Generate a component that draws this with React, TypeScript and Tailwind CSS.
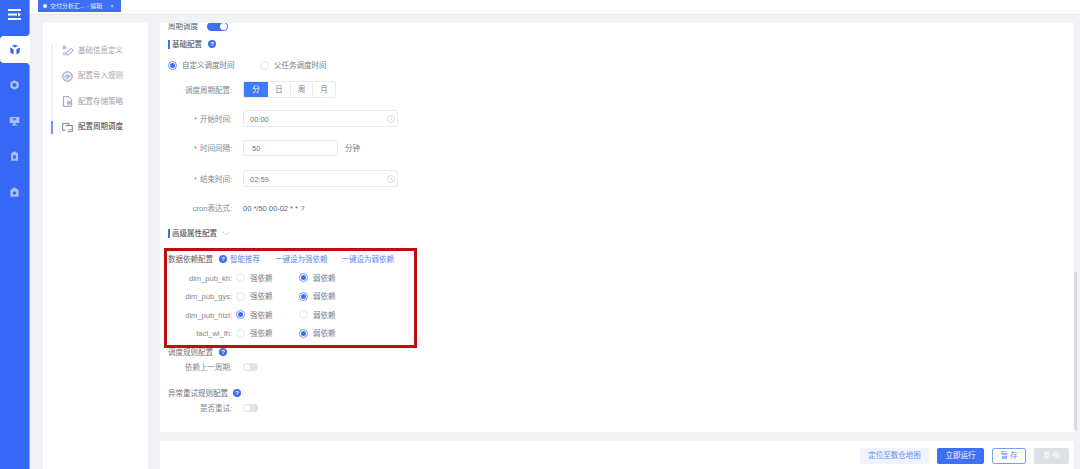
import React from 'react';

const Help = ({ className = '' }: { className?: string }) => (
  <span className={`inline-flex h-[8px] w-[8px] shrink-0 items-center justify-center rounded-full bg-[#3f6ff2] text-[6px] font-bold leading-none text-white ${className}`}>?</span>
);

const Radio = ({ on, label, className = '' }: { on?: boolean; label: string; className?: string }) => (
  <span className={`flex items-center ${className}`}>
    <span className={`flex h-[9px] w-[9px] shrink-0 items-center justify-center rounded-full border-[0.75px] bg-white ${on ? 'border-[#6f93f4]' : 'border-[#e2e4e8]'}`}>
      {on && <span className="h-[5px] w-[5px] rounded-full bg-[#3f6ff2]" />}
    </span>
    <span className="ml-[5px] pt-[2px] text-[#777b82]">{label}</span>
  </span>
);

const Off = () => (
  <span className="flex h-[8px] w-[15px] items-center rounded-full bg-[#dfe2e7] pl-[1px]">
    <span className="h-[6px] w-[6px] rounded-full bg-white" />
  </span>
);

const Row = ({ label, star, className = '', children }: { label: string; star?: boolean; className?: string; children: React.ReactNode }) => (
  <div className={`flex items-center ${className}`}>
    <span className="w-[72px] shrink-0 pt-[2px] text-right text-[#85888e]">
      {star && <span className="mr-[3px] text-[#f0594c]">*</span>}
      {label}
    </span>
    <div className="ml-[11px] flex items-center">{children}</div>
  </div>
);

const Clock = () => (
  <svg width="8" height="8" viewBox="0 0 16 16" fill="none" stroke="#c4c8ce" strokeWidth="1.2">
    <circle cx="8" cy="8" r="7" />
    <path d="M8 4v4.5l3 1.5" />
  </svg>
);

const TimeInput = ({ value }: { value: string }) => (
  <div className="flex h-[17px] w-[155px] items-center justify-between rounded-[2px] border border-[#e8eaee] pl-[6px] pr-[2px] text-[#6f7782]">
    <span className="pt-[2px]">{value}</span>
    <Clock />
  </div>
);

const SectionTitle = ({ label, className = '', children }: { label: string; className?: string; children?: React.ReactNode }) => (
  <div className={`ml-[8px] flex h-[14px] items-center ${className}`}>
    <span className="h-[9px] w-[2px] bg-[#3f6ff2]" />
    <span className="ml-[2px] pt-[2px] font-medium text-[#5c6068]">{label}</span>
    {children}
  </div>
);

const deps = [
  { name: 'dim_pub_kh', strong: false },
  { name: 'dim_pub_gys', strong: false },
  { name: 'dim_pub_htzl', strong: true },
  { name: 'fact_wl_fh', strong: false },
];

const menu = [
  {
    label: '基础信息定义',
    icon: (
      <>
        <rect x="1" y="1" width="5" height="5" fill="#a9bdf0" />
        <rect x="1" y="10" width="5" height="5" fill="#c8d4f5" />
        <path d="M7 11l5-5a2 2 0 0 1 3 3l-5 5a2 2 0 0 1-3-3z" fill="none" stroke="#7e8ba8" strokeWidth="1.3" />
      </>
    ),
  },
  {
    label: '配置导入规则',
    icon: (
      <>
        <circle cx="8" cy="8" r="7" fill="#e4eafa" stroke="#7e8ba8" strokeWidth="1.2" />
        <path d="M4 9c2-3 5-3 8-1M6 12l4-5" fill="none" stroke="#7e8ba8" strokeWidth="1.2" />
      </>
    ),
  },
  {
    label: '配置存储策略',
    icon: (
      <>
        <path d="M2 1h8l4 4v10H2z" fill="none" stroke="#7e8ba8" strokeWidth="1.2" />
        <circle cx="10" cy="10" r="3" fill="#9db4ee" />
      </>
    ),
  },
  {
    label: '配置周期调度',
    active: true,
    icon: (
      <>
        <path d="M5 12H1V2h9v3" fill="none" stroke="#6d7688" strokeWidth="1.3" />
        <path d="M5 5h10v9H8" fill="none" stroke="#6d7688" strokeWidth="1.3" />
        <path d="M9 11h5" stroke="#7c9cf0" strokeWidth="1.4" />
      </>
    ),
  },
];

const navIcons = [
  <path key="a" d="M8 1l6 3.5v7L8 15l-6-3.5v-7zM8 5a3 3 0 1 0 0 6 3 3 0 0 0 0-6z" fillRule="evenodd" />,
  <path key="b" d="M1 2h14v9H9.5v2H12v1.500H4V13h2.500v-2H1zM5 4l3 4 3-4z" fillRule="evenodd" />,
  <path key="c" d="M8 1l5 3v11H3V4zM6 7v5h4V7z" fillRule="evenodd" />,
  <path key="d" d="M8 1l6 4v10H2V5zM8 7a2.500 2.500 0 1 0 0 5 2.500 2.500 0 0 0 0-5z" fillRule="evenodd" />,
];

export default function App() {
  return (
    <div className="relative flex h-[469px] w-[1080px] overflow-hidden bg-[#f0f2f6] font-['Liberation_Sans','Noto_Sans_CJK_SC',sans-serif] text-[7.5px] leading-none">
      <aside className="flex w-[30px] shrink-0 flex-col bg-white">
        <div className="flex h-[36px] items-start justify-center rounded-br-[4px] border-r border-[#8fa8f7] bg-[#3768f5] pt-[9px]">
          <svg width="13" height="11" viewBox="0 0 13 11" fill="white">
            <rect width="13" height="2" />
            <rect y="4.500" width="9" height="2" />
            <path d="M10 3.500l3 2-3 2z" />
            <rect y="9" width="13" height="2" />
          </svg>
        </div>
        <div className="h-[27px] bg-[#3768f5]">
          <div className="flex h-full items-center justify-center rounded-l-[4px] bg-white">
            <svg width="12" height="12" viewBox="0 0 16 16" fill="#2f62ee">
              <path d="M8 1l2.500 1.500L8 5 5.500 2.500zM1.500 4.500L6 7v7L2 11.500zM14.500 4.500L10 7v7l4-2.500z" />
              <path d="M4 2.500L7 .8v1L4.500 3.500zM12 2.500L9 .8v1l2.500 1.700z" />
            </svg>
          </div>
        </div>
        <div className="flex flex-1 flex-col items-center gap-[23.500px] rounded-tr-[4px] border-r border-[#8fa8f7] bg-[#3768f5] pt-[16px]">
          {navIcons.map((icon, i) => (
            <svg key={i} width="11" height="12" viewBox="0 0 16 16" fill="#a9bffa">
              {icon}
            </svg>
          ))}
        </div>
      </aside>

      <div className="flex min-w-0 flex-1 flex-col">
        <header className="h-[15px] shrink-0 border-b border-[#e6e9ee] bg-white pl-[8px]">
          <div className="flex h-[12px] w-[83px] items-center bg-[#3f6ff2] pl-[5px] text-[6px] text-[#e6ecff]">
            <span className="h-[4px] w-[4px] rounded-full bg-white" />
            <span className="ml-[3px]">交付分析汇... - 编辑</span>
            <span className="ml-[8px]">×</span>
          </div>
        </header>

        <div className="flex min-h-0 flex-1 pl-[13px] pt-[8px]">
          <nav className="w-[105px] shrink-0 rounded-t-[2px] bg-white pl-[8px] pt-[21px]">
            <ul className="flex flex-col gap-[12.500px] border-l-2 border-[#eef0f4]">
              {menu.map((item) => (
                <li key={item.label} className={`-ml-[2px] flex h-[13px] items-center border-l-2 pl-[9px] ${item.active ? 'border-[#6f96f7]' : 'border-transparent'}`}>
                  <svg width="11" height="11" viewBox="0 0 16 16" className="shrink-0">
                    {item.icon}
                  </svg>
                  <span className={`ml-[5px] ${item.active ? 'font-medium text-[#5a5e66]' : 'text-[#a3a6ab]'}`}>{item.label}</span>
                </li>
              ))}
            </ul>
          </nav>

          <div className="ml-[12px] flex w-[914px] shrink-0 flex-col">
            <main className="h-[409px] overflow-hidden bg-white">
              <div className="-mt-[4px]">
                <div className="ml-[8px] flex h-[14px] items-center">
                  <span className="pt-[2px] text-[#5c6068]">周期调度</span>
                  <span className="ml-[9px] flex h-[9px] w-[21px] items-center justify-end rounded-full bg-[#3f6ff2] pr-[1px]">
                    <span className="h-[7px] w-[7px] rounded-full bg-white" />
                  </span>
                </div>

                <SectionTitle label="基础配置" className="mt-[4px]">
                  <Help className="ml-[6px]" />
                </SectionTitle>

                <div className="ml-[8px] mt-[7px] flex h-[14px] items-center">
                  <Radio on label="自定义调度时间" className="w-[92px]" />
                  <Radio label="父任务调度时间" />
                </div>

                <Row label="调度周期配置:" className="mt-[9px] h-[17px]">
                  <div className="flex h-[17px] w-[93px] overflow-hidden rounded-[2px] border border-[#e8eaee] text-[#777b82]">
                    <span className="flex w-[24px] items-center justify-center bg-[#3f7bfa] text-white">分</span>
                    <span className="flex w-[23px] items-center justify-center border-r border-[#e8eaee]">日</span>
                    <span className="flex w-[22px] items-center justify-center border-r border-[#e8eaee]">周</span>
                    <span className="flex flex-1 items-center justify-center">月</span>
                  </div>
                </Row>

                <Row label="开始时间:" star className="mt-[12px] h-[17px]">
                  <TimeInput value="00:00" />
                </Row>

                <Row label="时间间隔:" star className="mt-[13px] h-[16px]">
                  <div className="flex h-[16px] w-[95px] items-center rounded-[2px] border border-[#e8eaee] pl-[8px] pt-[1px] text-[#6f7782]">50</div>
                  <span className="ml-[7px] pt-[2px] text-[#777b82]">分钟</span>
                </Row>

                <Row label="结束时间:" star className="mt-[14px] h-[17px]">
                  <TimeInput value="02:59" />
                </Row>

                <Row label="cron表达式:" className="mt-[14px] h-[14px]">
                  <span className="pt-[2px] text-[#4d6a94]">00 */50 00-02 * * ?</span>
                </Row>

                <SectionTitle label="高级属性配置" className="mt-[11px]">
                  <svg width="8" height="5" viewBox="0 0 8 5" fill="none" stroke="#c3cde0" strokeWidth="0.8" className="ml-[5px]">
                    <path d="M1 1l3 3 3-3" />
                  </svg>
                </SectionTitle>

                <section className="ml-[4px] mt-[8px] box-border h-[100px] w-[253px] border-[3px] border-[#c00d12] pt-[1px]">
                  <div className="flex h-[14px] items-center pl-[1px]">
                    <span className="pt-[2px] text-[#5c6068]">数据依赖配置</span>
                    <Help className="ml-[6px]" />
                    <span className="ml-[3px] pt-[2px] text-[#5d86ee]">智能推荐</span>
                    <span className="ml-[15px] pt-[2px] text-[#5d86ee]">一键设为强依赖</span>
                    <span className="ml-[14px] pt-[2px] text-[#5d86ee]">一键设为弱依赖</span>
                  </div>
                  <div className="mt-[4.500px] flex flex-col gap-[4.500px]">
                    {deps.map((dep) => (
                      <div key={dep.name} className="flex h-[14px] items-center">
                        <span className="w-[65px] shrink-0 pt-[2px] text-right text-[#85888e]">{dep.name}:</span>
                        <Radio on={dep.strong} label="强依赖" className="ml-[4px] w-[63px]" />
                        <Radio on={!dep.strong} label="弱依赖" />
                      </div>
                    ))}
                  </div>
                </section>

                <div className="ml-[8px] flex h-[8px] items-center">
                  <span className="pt-[2px] text-[#6f7379]">调度规则配置</span>
                  <Help className="ml-[6px]" />
                </div>
                <Row label="依赖上一周期:" className="mt-[4px] h-[14px]">
                  <Off />
                </Row>

                <div className="ml-[8px] mt-[12px] flex h-[14px] items-center">
                  <span className="pt-[2px] text-[#6f7379]">异常重试规则配置</span>
                  <Help className="ml-[5px]" />
                </div>
                <Row label="是否重试:" className="mt-[1px] h-[14px]">
                  <Off />
                </Row>
              </div>
            </main>

            <footer className="mt-[9px] flex flex-1 justify-end gap-[8px] bg-white pr-[5px] pt-[7px]">
              <button className="h-[16px] w-[69px] rounded-[2px] bg-[#eef3fe] text-[#6a8fe8]">定位至数仓地图</button>
              <button className="h-[16px] w-[47px] rounded-[2px] bg-[#3f6ff2] text-white">立即运行</button>
              <button className="h-[16px] w-[34px] rounded-[2px] border border-[#7d9ef5] bg-white text-[#5d86ee]">暂 存</button>
              <button className="h-[16px] w-[35px] rounded-[2px] bg-[#dde0e5] text-white">发 布</button>
            </footer>
          </div>
        </div>
      </div>

      <div className="absolute right-[3px] top-[272px] h-[158px] w-[3px] bg-[#d9dadd]" />
    </div>
  );
}
